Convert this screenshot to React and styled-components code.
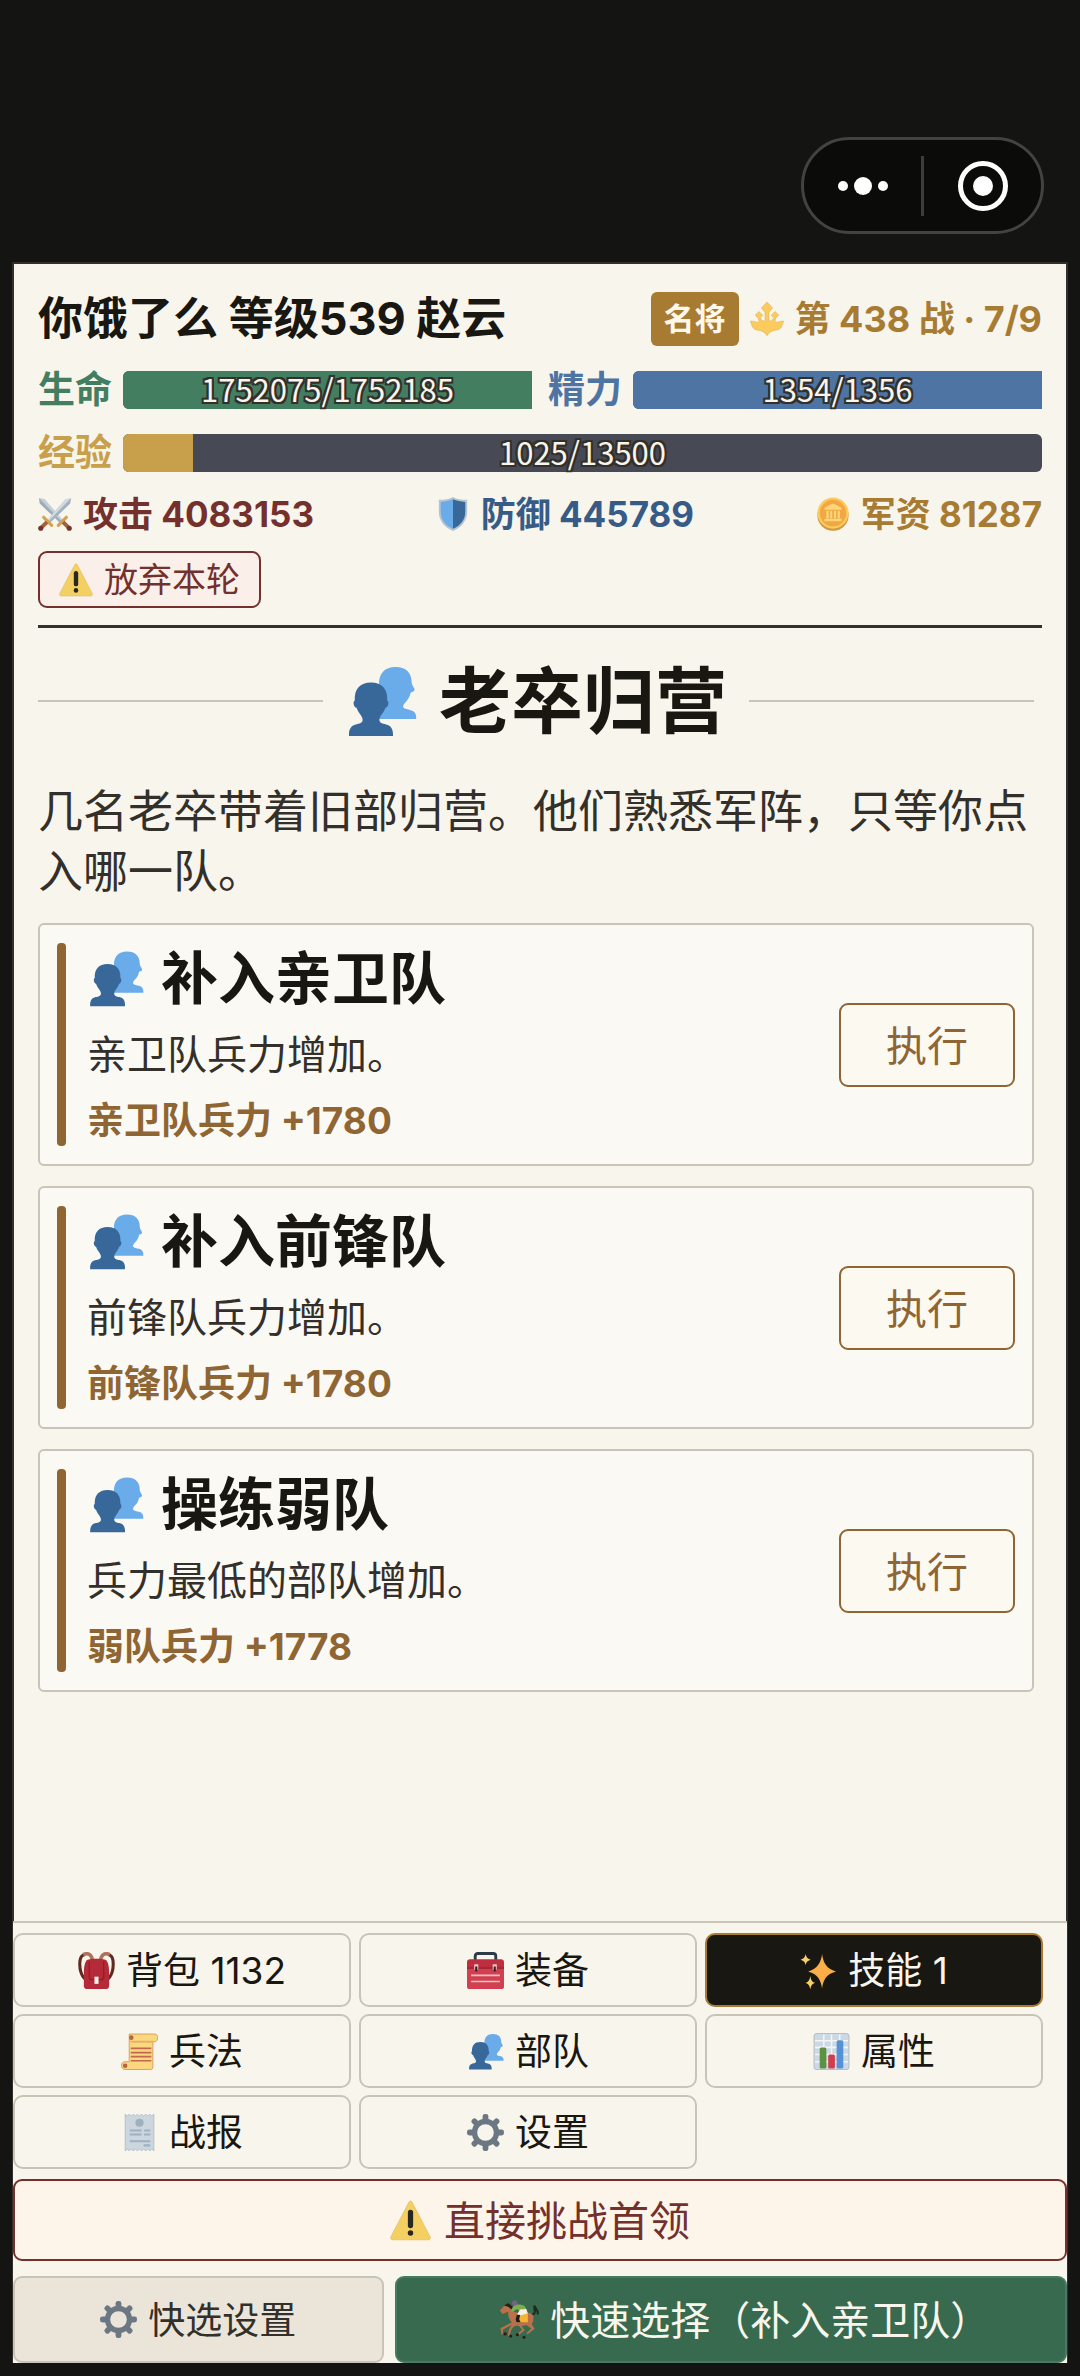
import React from "react";
import styled, { createGlobalStyle } from "styled-components";

const ink = "#181712";
const paper = "#f8f5ec";
const soft = "#33302b";
const line = "#c8c4b8";
const gold = "#a87b33";
const bronze = "#8f6533";
const danger = "#73302c";

const GlobalStyle = createGlobalStyle`
  *, *::before, *::after { box-sizing: border-box; }
  body {
    margin: 0;
    background: #141412;
    color: ${ink};
    font-family: "Inter", "Noto Sans CJK SC", sans-serif;
  }
  button {
    margin: 0;
    padding: 0;
    font: inherit;
    cursor: pointer;
  }
  h1, h2, h3, p { margin: 0; }
`;

/* ---------- icons ---------- */

const Svg = styled.svg`
  width: ${(p) => p.$size}px;
  height: ${(p) => p.$size}px;
  flex: none;
  display: block;
`;

const Icon = ({ size = 37, children }) => (
  <Svg $size={size} viewBox="0 0 36 36" aria-hidden="true">
    {children}
  </Svg>
);

const Warning = ({ size }) => (
  <Icon size={size}>
    <path fill="#f4cf62" stroke="#d8b65a" strokeWidth=".5" d="M2.700 35C.9 35 0 33.700.9 32L16.500 2c.8-1.600 2.200-1.600 3 0L35.100 32c.9 1.700 0 3-1.800 3H2.700z" />
    <rect x="15.700" y="8.500" width="4.600" height="16.200" rx="2.300" fill="#2a2720" />
    <circle cx="18" cy="29" r="2.400" fill="#2a2720" />
  </Icon>
);

const Busts = ({ size }) => (
  <Icon size={size}>
    <path fill="#6aabea" d="M35.600 27c.2-2.600-.8-4-2.800-4.400-1.500-.4-3-.6-3.600-1.300-.4-.9.200-1.800 1.100-2.700 1.300-1.300 2.200-3 2.400-4.300.2-.8.8-.7 1.500-1 .7-.4.7-1 .3-1.800-.6-1.100-1.200-1.700-1.200-3.200C33.300 4 30.500 1 25.200 1 19.900 1 17 4.300 17 9.200V27z" />
    <path fill="#376899" d="M2 35.500c-.2-3.500 1-5.200 3.500-5.800 1.700-.4 3.300-.6 3.300-2.300 0-2-2.300-3.400-3-6-1.500-.3-2-3.200-.9-3.700C4.600 12 7.500 8.800 13 8.800s8.400 3.200 8.100 8.900c1.100.5.6 3.400-.9 3.700-.7 2.600-3 4-3 6 0 1.700 1.600 1.900 3.300 2.300 2.500.6 3.700 2.300 3.500 5.800z" />
  </Icon>
);

const Swords = ({ size }) => (
  <Icon size={size}>
    <path fill="#c3ced7" d="M1 1l6 1 19 22-3 3L2 7z" />
    <path fill="#9dadb9" d="M1 1l23.500 24.500L23 27 2 7z" />
    <path fill="#cfd9e0" d="M35 1l-6 1-19 22 3 3L34 7z" />
    <path fill="#a3b2be" d="M34 7L35 1 11.500 25.500 13 27z" />
    <path stroke="#d3a257" strokeWidth="3.400" strokeLinecap="round" d="M6 21.500l8.500 8.500M30 21.500L21.500 30" />
    <path stroke="#a3603c" strokeWidth="4.200" d="M9.500 26.500L4 32M26.500 26.500L32 32" />
    <circle cx="2.900" cy="33.100" r="2.700" fill="#70352b" />
    <circle cx="33.100" cy="33.100" r="2.700" fill="#70352b" />
  </Icon>
);

const Shield = ({ size }) => (
  <Icon size={size}>
    <path fill="#b7c4cf" d="M18 0c4 2.400 9 3 15 3v13c0 9-6 16.500-15 20C9 32.500 3 25 3 16V3c6 0 11-.6 15-3z" />
    <path fill="#6aabea" d="M18 2.500C14.300 4.300 10 5 5 5.200V16c0 8 5 14.500 13 17.700z" />
    <path fill="#376899" d="M18 2.500c3.700 1.800 8 2.500 13 2.700V16c0 8-5 14.500-13 17.700z" />
  </Icon>
);

const Coin = ({ size }) => (
  <Icon size={size}>
    <ellipse cx="18" cy="19.500" rx="16.500" ry="16.300" fill="#cf9740" />
    <circle cx="18" cy="17" r="16.500" fill="#fbcb5e" />
    <circle cx="18" cy="17" r="14" fill="#f2a744" />
    <path fill="#fcd779" d="M18 7l9 4.500v2H9v-2zM11 14.500h2.500v8H11zm4 0h2.200v8H15zm4 0h2.200v8H19zm4 0h2.300v8H23zM9 23h18v2.800H9z" />
  </Icon>
);

const Emblem = ({ size }) => (
  <Icon size={size}>
    <path
      fill="#fbcb5e"
      stroke="#d9ab4d"
      strokeWidth=".5"
      d="M18 0l6 6.300-3.900 4.900V20h2c1.500-.8 2.400-2 2.700-3.500L22.300 14l4.200-4 4 3.800-3.300 3.600c0 1.600-.6 2.700-1.300 3.800 3.800.6 5.300-1 7.500-.9 1 .2 1.600-.4 2.500.3-1.200 1.300-1.500 3-2 4.500-1 3.500-4 4.500-8 5-4 .8-6.300 3-7.900 5.700-1.600-2.700-3.900-4.900-7.900-5.700-4-.5-7-1.500-8-5-.5-1.500-.8-3.200-2-4.500.9-.7 1.500-.1 2.500-.3 2.200-.1 3.700 1.500 7.500.9-.7-1.100-1.300-2.200-1.300-3.800l-3.300-3.600 4-3.800 4.200 4-2.500 2.500c.3 1.500 1.200 2.700 2.700 3.500h2v-8.800L12 6.300z"
    />
  </Icon>
);

const Backpack = () => (
  <Icon>
    <path fill="none" stroke="#5f2a20" strokeWidth="3" d="M8 27C3 24 1 16 2 8c.4-3 2-5 5-5.500M28 27c5-3 7-11 6-19-.4-3-2-5-5-5.500" />
    <path fill="none" stroke="#b0705a" strokeWidth="3.500" d="M5 2.500c5-2 8.500 0 9 6M31 2.500c-5-2-8.500 0-9 6" />
    <path fill="#b42a38" d="M8 8.500C10 6 26 6 28 8.500c2 3 2.500 8 2.300 15V33c0 2-1.300 3-3.300 3H9c-2 0-3.300-1-3.300-3v-9.500C5.500 16.500 6 11.500 8 8.500z" />
    <path fill="none" stroke="#8d1f2e" strokeWidth="1.200" d="M11 9v15c0 2 1 3 3 3h8c2 0 3-1 3-3V9" />
    <rect x="16" y="24" width="4" height="7" fill="#f6f0e6" />
  </Icon>
);

const Toolbox = () => (
  <Icon>
    <path fill="none" stroke="#2b3b47" strokeWidth="2.800" d="M8 8V4c0-1.500 1-2.500 2.500-2.500h15C27 1.500 28 2.500 28 4v4" />
    <rect y="7" width="36" height="29" rx="3" fill="#bd2f40" />
    <path fill="#d23f50" d="M0 16.500h36V33c0 2-1 3-3 3H3c-2 0-3-1-3-3z" />
    <path fill="#8d1f2e" d="M0 15h36v1H0z" />
    <path fill="#f0c2c2" d="M4 22h28v1.500H4zM4 28h28v1.500H4zM7 12h4v5H7zM25 12h4v5h-4z" />
    <path fill="#2a2720" d="M8 14h2v5H8zM26 14h2v5h-2z" />
  </Icon>
);

const Sparkles = () => (
  <Icon>
    <path fill="#f9ae48" d="M21.500 2c1 8 4 14.500 13.500 17-9.500 2.500-12.500 8.500-13.500 16.500C20.500 27.500 17 21.500 8 19c9-2.500 12.500-9 13.500-17z" />
    <path fill="#fbcf62" d="M5.500 2c.6 3 1.500 4.500 5 5.500-3.500 1-4.400 2.500-5 5.500C4.900 10 4 8.500.5 7.500 4 6.500 4.900 5 5.500 2zM10 23c.6 4 1.500 6 4.700 7-3.200 1-4.100 3-4.700 6.500C9.400 33 8.500 31 5.300 30 8.500 29 9.400 27 10 23z" />
  </Icon>
);

const Scroll = () => (
  <Icon>
    <path fill="#fbd77f" stroke="#d69c59" strokeWidth=".9" d="M8 1h25c3.500 0 3.500 7 0 7.500h-2V33c0 2-1 2.500-3 2.500H3.500C-.5 35-.5 28 3.500 28H8z" />
    <path fill="#e5b266" d="M8 7.500h23v2H12l-4-1z" />
    <circle cx="10" cy="4.500" r="2.200" fill="#b9643e" />
    <circle cx="4" cy="31.800" r="2.200" fill="#b9643e" />
    <path stroke="#c1694f" strokeWidth="1.700" d="M9.500 15h20M9.500 19h20M9.500 23h20M9.500 27h20" />
  </Icon>
);

const Chart = () => (
  <Icon>
    <rect x="1" y=".500" width="34" height="35" rx="3" fill="#ccd9e5" stroke="#b9bfc2" />
    <path stroke="#f4f5f3" strokeWidth="1.500" d="M2 7.500h32M2 14h32M2 21h32M2 28h32M10.500 1.500v33M18 1.500v33M26 1.500v33" />
    <rect x="6.500" y="14" width="6.500" height="20.500" rx="1.500" fill="#5c9140" />
    <rect x="14.800" y="21" width="6.500" height="13.500" rx="1.500" fill="#d03d4d" />
    <rect x="23" y="7" width="6.500" height="27.500" rx="1.500" fill="#5593d6" />
  </Icon>
);

const Receipt = () => (
  <Icon>
    <path fill="#cbd6de" stroke="#9fb0bd" strokeWidth=".6" d="M4 0l2 2 2-2 2 2 2-2 2 2 2-2 2 2 2-2 2 2 2-2 2 2 2-2 2 2 2-2v36l-2-2-2 2-2-2-2 2-2-2-2 2-2-2-2 2-2-2-2 2-2-2-2 2-2-2-2 2z" />
    <circle cx="18" cy="8.500" r="4" fill="#9fb0be" />
    <path fill="#9fb0be" d="M8.500 15H20v2H8.500zM22.500 15h6v2h-6zM8.500 19H20v2H8.500zM22.500 19h6v2h-6zM8.500 25.500h20v2h-20zM22 29.500h6.500v2H22z" />
  </Icon>
);

const Gear = () => (
  <Icon>
    <g fill="#6b7883">
      {[0, 45, 90, 135, 180, 225, 270, 315].map((a) => (
        <rect key={a} x="15.200" y="0" width="5.600" height="9" rx="2.300" transform={`rotate(${a} 18 18)`} />
      ))}
    </g>
    <circle cx="18" cy="18" r="10.700" fill="none" stroke="#6b7883" strokeWidth="5.200" />
  </Icon>
);

const Rider = ({ size }) => (
  <Icon size={size}>
    <path fill="none" stroke="#1f2a22" strokeWidth="2" strokeLinecap="round" d="M30 13c4.500-1 1-5 2-8 .3 3 3.500 4 2.800 7" />
    <path fill="#b9704b" d="M.8 9.500L4.500 5.500l4-2 4.500 5c1 2 2 3 5 3h8c3.500 0 5.500 2 5 5.500-.2 2-.8 3.500-1.500 4.500l2.500 4.500-6.500 5-.8-1.300 4.300-4-4.500-3.200c-3 1.500-6.500 1-9 .5-2 .8-3.500 2-4.500 4l-1.500 5.500-1.500-.2 1-6 2.500-4-8 4.500.3 4-1.500.2-1-5.500L11.500 20c-2-2-3.500-5-3.300-9.500L3 12.500z" />
    <path fill="none" stroke="#b9704b" strokeWidth="1.800" d="M19 23l3 4-5 4" />
    <path fill="#2b1d18" d="M4.500 5L8 3c3 1 5 3.500 6 7.500l-2.500-1.500C10 7 8 5.500 4.500 5z" />
    <path fill="#f2b632" d="M16.500 12H26v8h-9z" />
    <path fill="#7cae4c" d="M14 4h4.500c4 0 6 2.500 6.500 5.500l-6 1.500-2.500-3-5 3-1-1.500z" />
    <path fill="#f5efe8" d="M19 8.500l5.500-.5 1.500 4-5.500 1.500-4.500 1 .5-2z" />
    <path fill="#1f1c1a" d="M16 13l3 .5-.8 4 1.300 2.500h-3.500l-1-2z" />
    <circle cx="14.200" cy="2.600" r="2.400" fill="#75628a" />
    <circle cx="5.500" cy="30.500" r="1.500" fill="#2b1d18" />
    <circle cx="10.500" cy="32.500" r="1.400" fill="#2b1d18" />
    <circle cx="16.500" cy="31.200" r="1.400" fill="#2b1d18" />
    <circle cx="22.500" cy="33.500" r="1.400" fill="#2b1d18" />
  </Icon>
);

/* ---------- frame ---------- */

const Page = styled.div`
  min-height: 100vh;
  display: flex;
  flex-direction: column;
  padding: 0 12px 13px;
`;

const TopBar = styled.header`
  height: 262px;
  display: flex;
  justify-content: flex-end;
  align-items: flex-start;
  padding: 137px 24px 0 0;
`;

const Capsule = styled.div`
  display: flex;
  align-items: center;
  width: 243px;
  height: 97px;
  border: 3px solid #434341;
  border-radius: 49px;
  background: #0b0b09;
`;

const CapsuleButton = styled.button`
  flex: 1;
  height: 60px;
  display: flex;
  align-items: center;
  justify-content: center;
  border: 0;
  background: none;

  & + & {
    border-left: 3px solid #3d3d3b;
  }
`;

const Panel = styled.main`
  flex: 1;
  display: flex;
  flex-direction: column;
  border: 2px solid ${soft};
  border-bottom: 0;
  background: ${paper};
`;

/* ---------- status ---------- */

const Status = styled.section`
  margin: 0 24px;
  padding: 28px 0 17px;
  border-bottom: 3px solid ${soft};
`;

const StatusRows = styled.div`
  display: flex;
  flex-direction: column;
  gap: 25px;
`;

const Row = styled.div`
  display: flex;
  align-items: center;
  justify-content: space-between;
  gap: 16px;
`;

const Name = styled.h1`
  font-size: 45px;
  line-height: 54px;
  font-weight: 700;
`;

const Campaign = styled.div`
  display: flex;
  align-items: center;
  gap: 11px;
  color: ${gold};
  font-size: 36px;
  line-height: 54px;
  font-weight: 700;
  white-space: nowrap;
`;

const Rank = styled.span`
  padding: 0 13px;
  border-radius: 6px;
  background: ${gold};
  color: #fdf8ea;
  font-size: 31px;
`;

const Meter = styled.div`
  flex: 1;
  display: flex;
  align-items: center;
  gap: 11px;
  height: 38px;
  color: ${(p) => p.$color};
  font-size: 37px;
  line-height: 38px;
  font-weight: 700;
`;

const Track = styled.div`
  flex: 1;
  display: grid;
  height: 38px;
  border-radius: ${(p) => (p.$full ? "6px 0 0 6px" : "6px")};
  background: #474a54;
`;

const Fill = styled.div`
  grid-area: 1 / 1;
  border-radius: 6px 0 0 6px;
  background: ${(p) => p.$color};
`;

const Amount = styled.span`
  grid-area: 1 / 1;
  z-index: 1;
  text-align: center;
  color: #f8f5ec;
  font-family: "Noto Sans CJK SC", sans-serif;
  font-size: 31px;
  line-height: 36px;
  font-weight: 400;
  text-shadow: -2px 0 ${soft}, 2px 0 ${soft}, 0 -2px ${soft}, 0 2px ${soft},
    -2px -2px ${soft}, 2px -2px ${soft}, -2px 2px ${soft}, 2px 2px ${soft};
`;

const Stat = styled.div`
  display: flex;
  align-items: center;
  gap: 11px;
  color: ${(p) => p.$color};
  font-size: 35px;
  line-height: 34px;
  font-weight: 700;
`;

/* ---------- shared button text ---------- */

const Label = styled.span`
  padding-bottom: 4px;
`;

const Abandon = styled.button`
  display: flex;
  align-items: center;
  gap: 11px;
  height: 57px;
  margin-top: 20px;
  padding: 0 19px;
  border: 2px solid ${danger};
  border-radius: 9px;
  background: #faf0e9;
  color: ${danger};
  font-size: 34px;
`;

/* ---------- event ---------- */

const Event = styled.section`
  flex: 1;
  padding: 28px 32px 32px 24px;
`;

const Heading = styled.div`
  display: flex;
  align-items: center;
  gap: 22px;

  &::before,
  &::after {
    content: "";
    flex: 1;
    height: 2px;
    background: ${line};
  }
`;

const HeadingText = styled.h2`
  display: flex;
  align-items: center;
  gap: 22px;
  font-size: 72px;
  line-height: 90px;
  font-weight: 700;
`;

const Story = styled.p`
  margin-top: 36px;
  color: ${soft};
  font-size: 45px;
  line-height: 60px;
`;

const Choices = styled.div`
  display: flex;
  flex-direction: column;
  gap: 20px;
  margin-top: 21px;
`;

const Card = styled.article`
  display: flex;
  align-items: center;
  gap: 21px;
  padding: 18px 17px;
  border: 2px solid ${line};
  border-radius: 6px;
  background: #fbf9f3;
`;

const Accent = styled.div`
  align-self: stretch;
  width: 9px;
  border-radius: 4px;
  background: ${bronze};
`;

const CardBody = styled.div`
  flex: 1;
  display: flex;
  flex-direction: column;
  gap: 13px;
`;

const CardTitle = styled.h3`
  display: flex;
  align-items: center;
  gap: 17px;
  font-size: 57px;
  line-height: 71px;
  font-weight: 700;
`;

const CardText = styled.p`
  color: ${soft};
  font-size: 40px;
  line-height: 56px;
`;

const CardEffect = styled.p`
  color: ${bronze};
  font-size: 37px;
  line-height: 50px;
  font-weight: 700;
`;

const Execute = styled.button`
  display: flex;
  align-items: center;
  justify-content: center;
  width: 176px;
  height: 84px;
  border: 2px solid ${bronze};
  border-radius: 9px;
  background: #fcf9f1;
  color: ${bronze};
  font-size: 41px;
`;

/* ---------- footer ---------- */

const Footer = styled.footer`
  margin: 0 -1px;
  border-top: 2px solid ${line};
  background: ${paper};
`;

const Menu = styled.nav`
  display: grid;
  grid-template-columns: repeat(3, 1fr);
  gap: 7px 8px;
  padding: 10px 24px 10px 0;
`;

const MenuButton = styled.button`
  display: flex;
  align-items: center;
  justify-content: center;
  gap: 11px;
  height: 74px;
  border: 2px solid ${(p) => (p.$active ? gold : line)};
  border-radius: 10px;
  background: ${(p) => (p.$active ? ink : paper)};
  color: ${(p) => (p.$active ? "#f8f5ec" : ink)};
  font-size: 37px;
`;

const Boss = styled.button`
  display: flex;
  align-items: center;
  justify-content: center;
  gap: 13px;
  width: 100%;
  height: 82px;
  border: 2px solid ${danger};
  border-radius: 9px;
  background: #fdf5ea;
  color: ${danger};
  font-size: 41px;
`;

const QuickBar = styled.div`
  display: grid;
  grid-template-columns: 371fr 673fr;
  gap: 11px;
  padding-top: 15px;
`;

const Quick = styled.button`
  display: flex;
  align-items: center;
  justify-content: center;
  gap: 11px;
  height: 87px;
  padding-left: ${(p) => (p.$primary ? 28 : 0)}px;
  border: 2px solid ${(p) => (p.$primary ? "#4a7a60" : line)};
  border-radius: 9px;
  background: ${(p) => (p.$primary ? "#376a4e" : "#ebe5d9")};
  color: ${(p) => (p.$primary ? "#f8f5ec" : soft)};
  font-size: ${(p) => (p.$primary ? 40 : 37)}px;
`;

const choices = [
  { title: "补入亲卫队", text: "亲卫队兵力增加。", effect: "亲卫队兵力 +1780" },
  { title: "补入前锋队", text: "前锋队兵力增加。", effect: "前锋队兵力 +1780" },
  { title: "操练弱队", text: "兵力最低的部队增加。", effect: "弱队兵力 +1778" },
];

const menu = [
  { label: "背包 1132", icon: <Backpack /> },
  { label: "装备", icon: <Toolbox /> },
  { label: "技能 1", icon: <Sparkles />, active: true },
  { label: "兵法", icon: <Scroll /> },
  { label: "部队", icon: <Busts /> },
  { label: "属性", icon: <Chart /> },
  { label: "战报", icon: <Receipt /> },
  { label: "设置", icon: <Gear /> },
];

const Bar = ({ label, color, value, max }) => {
  const percent = Math.ceil((value / max) * 1000) / 10;
  return (
    <Meter $color={color}>
      {label}
      <Track $full={percent >= 99}>
        <Fill $color={color} style={{ width: `${percent}%` }} />
        <Amount>{`${value}/${max}`}</Amount>
      </Track>
    </Meter>
  );
};

export default function App() {
  return (
    <Page lang="zh-CN">
      <GlobalStyle />
      <TopBar>
        <Capsule>
          <CapsuleButton aria-label="更多">
            <svg width="52" height="20" viewBox="0 0 52 20" fill="#fff">
              <circle cx="6" cy="10" r="5" />
              <circle cx="26" cy="10" r="9" />
              <circle cx="46" cy="10" r="5" />
            </svg>
          </CapsuleButton>
          <CapsuleButton aria-label="关闭">
            <svg width="52" height="52" viewBox="0 0 52 52">
              <circle cx="26" cy="26" r="22.500" fill="none" stroke="#fff" strokeWidth="5" />
              <circle cx="26" cy="26" r="10" fill="#fff" />
            </svg>
          </CapsuleButton>
        </Capsule>
      </TopBar>

      <Panel>
        <Status>
          <StatusRows>
            <Row>
              <Name>你饿了么 等级539 赵云</Name>
              <Campaign>
                <Rank>名将</Rank>
                <Emblem size={34} />
                第 438 战 · 7/9
              </Campaign>
            </Row>
            <Row>
              <Bar label="生命" color="#437e61" value={1752075} max={1752185} />
              <Bar label="精力" color="#4d74a3" value={1354} max={1356} />
            </Row>
            <Row>
              <Bar label="经验" color="#c8a04c" value={1025} max={13500} />
            </Row>
            <Row>
              <Stat $color={danger}>
                <Swords size={34} />
                攻击 4083153
              </Stat>
              <Stat $color="#375b87">
                <Shield size={34} />
                防御 445789
              </Stat>
              <Stat $color={gold}>
                <Coin size={34} />
                军资 81287
              </Stat>
            </Row>
          </StatusRows>
          <Abandon>
            <Warning size={34} />
            <Label>放弃本轮</Label>
          </Abandon>
        </Status>

        <Event>
          <Heading>
            <HeadingText>
              <Busts size={72} />
              老卒归营
            </HeadingText>
          </Heading>
          <Story>几名老卒带着旧部归营。他们熟悉军阵，只等你点入哪一队。</Story>
          <Choices>
            {choices.map((c) => (
              <Card key={c.title}>
                <Accent />
                <CardBody>
                  <CardTitle>
                    <Busts size={57} />
                    {c.title}
                  </CardTitle>
                  <CardText>{c.text}</CardText>
                  <CardEffect>{c.effect}</CardEffect>
                </CardBody>
                <Execute>
                  <Label>执行</Label>
                </Execute>
              </Card>
            ))}
          </Choices>
        </Event>

        <Footer>
          <Menu>
            {menu.map((m) => (
              <MenuButton key={m.label} $active={m.active}>
                {m.icon}
                <Label>{m.label}</Label>
              </MenuButton>
            ))}
          </Menu>
          <Boss>
            <Warning size={41} />
            <Label>直接挑战首领</Label>
          </Boss>
          <QuickBar>
            <Quick>
              <Gear />
              <Label>快选设置</Label>
            </Quick>
            <Quick $primary>
              <Rider size={40} />
              <Label>快速选择（补入亲卫队）</Label>
            </Quick>
          </QuickBar>
        </Footer>
      </Panel>
    </Page>
  );
}
